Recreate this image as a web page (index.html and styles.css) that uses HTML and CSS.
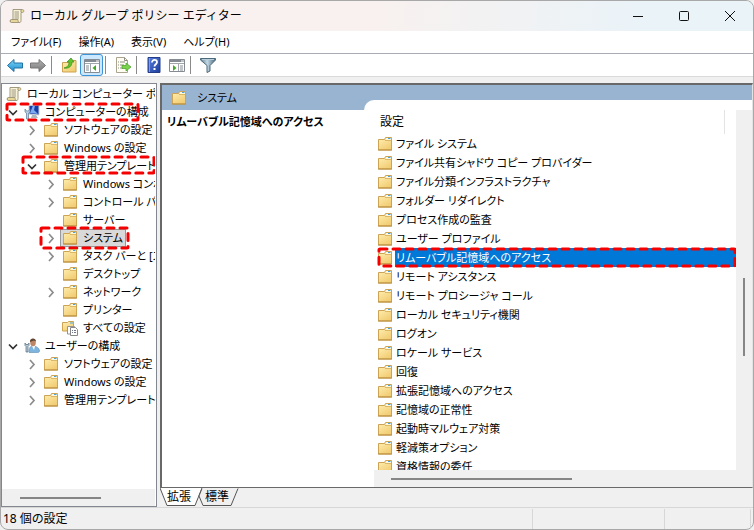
FILE: index.html
```
<!DOCTYPE html>
<html lang="ja">
<head>
<meta charset="utf-8">
<title>ローカル グループ ポリシー エディター</title>
<link rel="stylesheet" href="styles.css">
</head>
<body>
<svg class="defs" aria-hidden="true">
  <defs>
    <linearGradient id="gold" x1="0" y1="0" x2="0.6" y2="1"><stop offset="0" stop-color="#fff0b4"/><stop offset="1" stop-color="#f2cd74"/></linearGradient>
    <linearGradient id="blueArrow" x1="0" y1="0" x2="0" y2="1"><stop offset="0" stop-color="#7fd4f7"/><stop offset="1" stop-color="#1a8fd0"/></linearGradient>
    <linearGradient id="grayArrow" x1="0" y1="0" x2="0" y2="1"><stop offset="0" stop-color="#b5b5b5"/><stop offset="1" stop-color="#777"/></linearGradient>
    <linearGradient id="help" x1="0" y1="0" x2="1" y2="1"><stop offset="0" stop-color="#5a80dc"/><stop offset="1" stop-color="#1c3c9c"/></linearGradient>
    <linearGradient id="steel" x1="0" y1="0" x2="1" y2="0"><stop offset="0" stop-color="#5d7d94"/><stop offset=".45" stop-color="#c4d8e4"/><stop offset="1" stop-color="#48687e"/></linearGradient>
    <symbol id="folder" viewBox="0 1 16 16">
      <path d="M1.500 4.500h6l1-2h6V15h-13z" fill="url(#gold)" stroke="#cda354"/>
      <path d="M9 3h5v2H9z" fill="#fff8dc"/><path d="M11 3h2.500v1H11z" fill="#4ba3dc"/>
      <path d="M8 5.500h6" stroke="#dcb765"/><path d="M1 15h14" stroke="#b88d3c"/>
    </symbol>
    <symbol id="scroll" viewBox="0 0 16 16">
      <path d="M4 1.500h9.500c1.800 0 1.800 3 0 3H12v8c0 1.500-.5 2-2 2H2.500C.8 14.500.8 11.500 2.500 11.500H4z" fill="#f9f3da" stroke="#a19a7d"/>
      <path d="M2.500 11.500H9c0 1.500.4 3 1.500 3h-8C.8 14.500.8 11.500 2.500 11.500z" fill="#e9d697" stroke="#a19a7d"/>
      <path d="M12 2h1.500c1.200 0 1.200 2 0 2H12z" fill="#e9d697"/>
      <path d="M12 1.500V4M5.500 4H10M5.500 6H10M5.500 8H10M5.500 10H10" stroke="#9b957e"/>
    </symbol>
    <symbol id="computer" viewBox="0 0 16 16">
      <path d="M5 1.500l10-.5v10l-10-1z" fill="#173ca8" stroke="#c7ced8"/>
      <path d="M9 1.500h2L10 6l4 4-8-1z" fill="#7eaaf2"/>
      <path d="M8 11h4l2 3H7z" fill="#aeb6c0"/>
      <path d="M1 5v3l1.500 1v6h2V9L6 8V5L4.500 7h-2z" fill="#bdd3e5" stroke="#5c7b97" stroke-width=".7"/>
    </symbol>
    <symbol id="user" viewBox="0 0 16 16">
      <path d="M5 14.500c0-4.500 1-6.500 4-6.500s6.500 2 6.500 5c0 1-1 1.500-2 1.500z" fill="#7fb4de" stroke="#5b8db4" stroke-width=".6"/>
      <path d="M8 8l2 4 1-4z" fill="#fff"/>
      <ellipse cx="9" cy="4.500" rx="2.800" ry="3.800" fill="#bd8766"/>
      <path d="M6 4c-.5-4.500 6-4.500 6-.5L10 2.500z" fill="#5e4534"/>
      <path d="M1 5v2.500L2 8.500V14h2V8.500l1-1V5L4 6.500H2z" fill="#b8c9d6" stroke="#516b80" stroke-width=".7"/>
    </symbol>
    <symbol id="folder-all" viewBox="0 0 16 16">
      <path d="M.5 2.500h5l1-1h5V11H.5z" fill="url(#gold)" stroke="#cda354"/>
      <path d="M8 2.500h3v1H8z" fill="#4ba3dc"/>
      <path d="M5.500 6.500h7V14h-7z" fill="#fff" stroke="#949494"/>
      <path d="M8.500 7.500h5l2 2v6h-7z" fill="#fff" stroke="#888"/>
      <path d="M10 10.500h1M12 10.500h2M10 12.500h1M12 12.500h2" stroke="#6d7786"/>
    </symbol>
    <symbol id="closed" viewBox="0 0 14 14"><path d="M5 3L9 7.500 5 12" fill="none" stroke="#8c8c8c" stroke-width="1.700"/></symbol>
    <symbol id="open" viewBox="0 0 14 14"><path d="M3 5.500L7 9.500l4-4" fill="none" stroke="#333" stroke-width="1.700"/></symbol>
  </defs>
</svg>

<div class="window">
  <header class="titlebar">
    <svg class="icon"><use href="#scroll"/></svg>
    <h1 class="title">ローカル グループ ポリシー エディター</h1>
    <div class="controls">
      <button aria-label="最小化"><svg viewBox="0 0 12 12"><path d="M1 6.500h10"/></svg></button>
      <button aria-label="最大化"><svg viewBox="0 0 12 12"><rect x="1.500" y="1.500" width="9" height="9" rx="1"/></svg></button>
      <button aria-label="閉じる"><svg viewBox="0 0 12 12"><path d="M1 1l10 10M11 1L1 11"/></svg></button>
    </div>
  </header>

  <nav class="menubar">
    <button>ファイル(F)</button><button>操作(A)</button><button>表示(V)</button><button>ヘルプ(H)</button>
  </nav>

  <div class="toolbar">
    <button aria-label="戻る"><svg class="tool" viewBox="0 0 18 18"><path d="M1.500 9.500L8 3.500V7h8.500v5H8v3.500z" fill="url(#blueArrow)" stroke="#2272a4"/></svg></button>
    <button aria-label="進む"><svg class="tool" viewBox="0 0 18 18"><path d="M16.500 9.500L10 3.500V7H1.500v5H10v3.500z" fill="url(#grayArrow)" stroke="#777"/></svg></button>
    <span class="divider"></span>
    <button aria-label="上へ"><svg class="tool" viewBox="0 0 18 18"><path d="M2.500 6.500h6l1.500-2h6V16H2.500z" fill="url(#gold)" stroke="#cda354"/><path d="M4 12c4-1 5-3 5-6H7l4-4 3 4h-2c0 4-3 7-8 6z" fill="#62c42d" stroke="#348c18" stroke-width=".7"/></svg></button>
    <button class="pressed" aria-label="コンソール ツリーの表示"><svg class="tool" viewBox="0 0 18 18"><path d="M1.500 3.500h15v13h-15z" fill="#fff" stroke="#858b92"/><path d="M2 5h14" stroke="#858b92" stroke-width="2"/><path d="M13 5h3" stroke="#fff"/><path d="M2 7.500h14M7.500 8v8" stroke="#a0a6ac"/><path d="M3 10h3M3 12h3M3 14h3" stroke="#858b92"/><path d="M13 9v6l-3.500-3z" fill="#43a82a"/></svg></button>
    <span class="divider"></span>
    <button aria-label="一覧のエクスポート"><svg class="tool" viewBox="0 0 18 18"><path d="M2.500 1.500h8l3 3v12h-11z" fill="#fffdf2" stroke="#aaa48e"/><path d="M10.500 1.500v3h3M4 6h1m1 0h5M4 9h1m1 0h4M4 12h1m1 0h3" fill="none" stroke="#8d8d85"/><path d="M8 9.500h4V7l5 4-5 4v-2.500H8z" fill="#7bd34b" stroke="#489b2e" stroke-width=".7"/></svg></button>
    <span class="divider"></span>
    <button aria-label="ヘルプ"><svg class="tool" viewBox="0 0 18 18"><path d="M3 1.500h12v15H3z" fill="url(#help)" stroke="#233d89"/><path d="M4.500 2v14" stroke="#7f9be2"/><path d="M7 6.500C7 3 12 3.300 12 6.300c0 2-2.500 2-2.500 4.200" fill="none" stroke="#fff" stroke-width="1.800"/><path d="M8.500 12h2v2h-2z" fill="#fff"/></svg></button>
    <button aria-label="操作ウィンドウの表示"><svg class="tool" viewBox="0 0 18 18"><path d="M1.500 3.500h15v12h-15z" fill="#fff" stroke="#858b92"/><path d="M2 5h14" stroke="#858b92" stroke-width="2"/><path d="M13 5h3" stroke="#fff"/><path d="M2 7.500h14M10.500 8v7" stroke="#a0a6ac"/><path d="M12 10h3M12 12h3M12 14h3" stroke="#858b92"/><path d="M5 9v6l3.500-3z" fill="#43a82a"/></svg></button>
    <span class="divider"></span>
    <button aria-label="フィルター"><svg class="tool" viewBox="0 0 18 18"><path d="M1.500 2.500h15V4L11 9.500V15l-3 1.500v-7L1.500 4z" fill="url(#steel)" stroke="#4d697c"/><path d="M3 3.500h12" stroke="#b9cfdb"/></svg></button>
  </div>

  <main class="workspace">
    <section class="tree-panel">
      <ul class="tree">
        <li class="node root"><button class="label"><svg class="icon"><use href="#scroll"/></svg>ローカル コンピューター ポリシー</button></li>
        <li class="node"><svg class="chevron"><use href="#open"/></svg><button class="label"><svg class="icon"><use href="#computer"/></svg>コンピューターの構成</button><svg class="mark mark-computer"><rect width="100%" height="100%"/></svg></li>
        <li class="node level-2"><svg class="chevron"><use href="#closed"/></svg><button class="label"><svg class="icon"><use href="#folder"/></svg>ソフトウェアの設定</button></li>
        <li class="node level-2"><svg class="chevron"><use href="#closed"/></svg><button class="label"><svg class="icon"><use href="#folder"/></svg>Windows の設定</button></li>
        <li class="node level-2"><svg class="chevron"><use href="#open"/></svg><button class="label"><svg class="icon"><use href="#folder"/></svg>管理用テンプレート</button><svg class="mark mark-template"><rect width="100%" height="100%"/></svg></li>
        <li class="node level-3"><svg class="chevron"><use href="#closed"/></svg><button class="label"><svg class="icon"><use href="#folder"/></svg>Windows コンポーネント</button></li>
        <li class="node level-3"><svg class="chevron"><use href="#closed"/></svg><button class="label"><svg class="icon"><use href="#folder"/></svg>コントロール パネル</button></li>
        <li class="node level-3"><svg class="chevron"></svg><button class="label"><svg class="icon"><use href="#folder"/></svg>サーバー</button></li>
        <li class="node level-3"><svg class="chevron"><use href="#closed"/></svg><button class="label current"><svg class="icon"><use href="#folder"/></svg>システム</button><svg class="mark mark-system"><rect width="100%" height="100%"/></svg></li>
        <li class="node level-3"><svg class="chevron"><use href="#closed"/></svg><button class="label"><svg class="icon"><use href="#folder"/></svg>タスク バーと [スタート] メニュー</button></li>
        <li class="node level-3"><svg class="chevron"></svg><button class="label"><svg class="icon"><use href="#folder"/></svg>デスクトップ</button></li>
        <li class="node level-3"><svg class="chevron"><use href="#closed"/></svg><button class="label"><svg class="icon"><use href="#folder"/></svg>ネットワーク</button></li>
        <li class="node level-3"><svg class="chevron"></svg><button class="label"><svg class="icon"><use href="#folder"/></svg>プリンター</button></li>
        <li class="node level-3"><svg class="chevron"></svg><button class="label"><svg class="icon"><use href="#folder-all"/></svg>すべての設定</button></li>
        <li class="node"><svg class="chevron"><use href="#open"/></svg><button class="label"><svg class="icon"><use href="#user"/></svg>ユーザーの構成</button></li>
        <li class="node level-2"><svg class="chevron"><use href="#closed"/></svg><button class="label"><svg class="icon"><use href="#folder"/></svg>ソフトウェアの設定</button></li>
        <li class="node level-2"><svg class="chevron"><use href="#closed"/></svg><button class="label"><svg class="icon"><use href="#folder"/></svg>Windows の設定</button></li>
        <li class="node level-2"><svg class="chevron"><use href="#closed"/></svg><button class="label"><svg class="icon"><use href="#folder"/></svg>管理用テンプレート</button></li>
      </ul>
      <div class="scroll-x tree-scroll"><div class="thumb"></div></div>
    </section>

    <div class="detail">
      <section class="detail-panel">
        <header class="detail-header"><svg class="icon"><use href="#folder"/></svg><h2>システム</h2></header>
        <div class="description"><h3>リムーバブル記憶域へのアクセス</h3></div>
        <div class="settings">
          <div class="curve"></div>
          <div class="column-head"><span>設定</span></div>
          <ul class="list">
            <li><svg class="icon"><use href="#folder"/></svg><button>ファイル システム</button></li>
            <li><svg class="icon"><use href="#folder"/></svg><button>ファイル共有シャドウ コピー プロバイダー</button></li>
            <li><svg class="icon"><use href="#folder"/></svg><button>ファイル分類インフラストラクチャ</button></li>
            <li><svg class="icon"><use href="#folder"/></svg><button>フォルダー リダイレクト</button></li>
            <li><svg class="icon"><use href="#folder"/></svg><button>プロセス作成の監査</button></li>
            <li><svg class="icon"><use href="#folder"/></svg><button>ユーザー プロファイル</button></li>
            <li class="selected"><svg class="icon"><use href="#folder"/></svg><button>リムーバブル記憶域へのアクセス</button><svg class="mark mark-setting"><rect width="100%" height="100%"/></svg></li>
            <li><svg class="icon"><use href="#folder"/></svg><button>リモート アシスタンス</button></li>
            <li><svg class="icon"><use href="#folder"/></svg><button>リモート プロシージャ コール</button></li>
            <li><svg class="icon"><use href="#folder"/></svg><button>ローカル セキュリティ機関</button></li>
            <li><svg class="icon"><use href="#folder"/></svg><button>ログオン</button></li>
            <li><svg class="icon"><use href="#folder"/></svg><button>ロケール サービス</button></li>
            <li><svg class="icon"><use href="#folder"/></svg><button>回復</button></li>
            <li><svg class="icon"><use href="#folder"/></svg><button>拡張記憶域へのアクセス</button></li>
            <li><svg class="icon"><use href="#folder"/></svg><button>記憶域の正常性</button></li>
            <li><svg class="icon"><use href="#folder"/></svg><button>起動時マルウェア対策</button></li>
            <li><svg class="icon"><use href="#folder"/></svg><button>軽減策オプション</button></li>
            <li><svg class="icon"><use href="#folder"/></svg><button>資格情報の委任</button></li>
          </ul>
          <div class="scroll-y"><div class="thumb"></div></div>
          <div class="scroll-x list-scroll"><div class="thumb"></div></div>
        </div>
      </section>
      <div class="tabs">
        <button class="tab"><svg viewBox="0 0 42 18"><path d="M0 0l7 17.500h28L42 0" fill="#fff" stroke="#555"/></svg><span>拡張</span></button>
        <button class="tab"><svg viewBox="0 0 42 18"><path d="M4 .5L1 8l4 9.500h28L40 .5" fill="#f0f0f0" stroke="#555"/></svg><span>標準</span></button>
      </div>
    </div>
  </main>

  <footer class="status"><span>18 個の設定</span><span></span><span></span></footer>
</div>
</body>
</html>
```
FILE: styles.css
```
* { box-sizing: border-box; }

body {
  margin: 0;
  background: #f0f0f0;
  color: #000;
  font: 12px/18px "Noto Sans", "Noto Sans CJK JP", sans-serif;
  font-feature-settings: "palt";
}

h1, h2, h3, ul { margin: 0; padding: 0; font-size: inherit; font-weight: normal; list-style: none; }
button { margin: 0; padding: 0; border: 0; background: none; color: inherit; font: inherit; font-feature-settings: inherit; white-space: nowrap; }
svg { display: block; flex: none; }
.defs { position: absolute; width: 0; height: 0; }
.icon { width: 16px; height: 16px; }

.window {
  display: flex;
  flex-direction: column;
  height: 100vh;
  overflow: hidden;
  border: 1px solid #a8a8a8;
  border-radius: 8px;
  background: #f0f0f0;
}

.titlebar { display: flex; align-items: center; height: 30px; padding-left: 8px; background: linear-gradient(90deg, #f8f1ef 50%, #eaf3f8 85%); }
.title { flex: 1; margin-left: 5px; font-feature-settings: normal; }
.controls { display: flex; }
.controls button { width: 46px; height: 30px; display: grid; place-items: center; }
.controls svg { width: 12px; height: 12px; fill: none; stroke: #111; }

.menubar, .tree, .detail-header, .description, .list { font-size: 11px; }

.menubar { display: flex; gap: 17px; height: 23px; padding: 1px 10px; background: #fff; border-bottom: 1px solid #a9adb3; }

.toolbar { display: flex; align-items: center; height: 23px; padding-left: 2px; background: #fff; border-bottom: 1px solid #dadada; }
.toolbar button { display: grid; place-items: center; width: 23px; height: 22px; }
.toolbar .pressed { border: 1px solid #3c93d6; border-radius: 3px; background: #cce8ff; }
.tool { width: 18px; height: 18px; }
.divider { width: 1px; height: 18px; margin: 0 5px 0 2px; background: #8a8a8a; }

.workspace { flex: 1; display: flex; gap: 3px; min-height: 0; padding-top: 6px; }
.tree-panel { display: flex; flex-direction: column; width: 156px; padding-right: 1px; border: 1px solid #828790; background: #fff; }
.tree { flex: 1; min-height: 0; overflow: hidden; padding-top: 1px; }
.node { position: relative; display: flex; align-items: center; gap: 2px; height: 18px; padding-left: 4px; }
.root { padding-left: 2px; }
.level-2 { padding-left: 23px; }
.level-3 { padding-left: 42px; }
.chevron { width: 14px; height: 14px; }
.label { display: flex; align-items: center; gap: 5px; height: 18px; padding: 0 2px 0 1px; border: 1px solid transparent; line-height: 16px; }
.current { border-color: #999; background: #d9d9d9; }

.scroll-x, .scroll-y { background: #f0f0f0; }
.scroll-x { height: 17px; padding-top: 8px; }
.scroll-x .thumb { height: 2px; background: #868686; }
.tree-scroll .thumb { width: 53%; margin-left: 18px; }

.detail { flex: 1; display: flex; flex-direction: column; min-width: 0; }
.detail-panel {
  flex: 1;
  display: grid;
  grid-template: 25px 1fr / 212px 1fr;
  min-height: 0;
  border: solid #696969;
  border-width: 2px 1px 1px 2px;
  border-right-color: #e3e3e3;
  background: #fff;
}
.detail-header { grid-column: 1 / 3; display: flex; align-items: center; gap: 10px; padding-left: 9px; background: #99b4d1; }
.description { padding: 3px 5px; }
.description h3 { font-weight: bold; }
.settings { position: relative; display: grid; grid-template: 24px 1fr 17px / 1fr 16px; min-height: 0; min-width: 0; }
.curve { position: absolute; inset: -10px 0 auto -10px; height: 10px; border-top-left-radius: 10px; background: #fff; }
.column-head { margin-right: 11px; padding: 3px 6px; border-right: 1px solid #e3e3e3; }
.list { grid-area: 2 / 1; overflow: hidden; }
.list li { position: relative; display: flex; align-items: center; gap: 2px; height: 19px; padding-left: 3px; }
.list button { flex: 1; height: 19px; padding: 0 1px; text-align: left; }
.selected button { background: #0078d7; color: #fff; }
.scroll-y { grid-area: 1 / 2 / 3 / 3; padding: 168px 0 0 7px; }
.scroll-y .thumb { width: 2px; height: 78px; background: #868686; }
.list-scroll { grid-area: 3 / 1 / 4 / 3; }
.list-scroll .thumb { width: 48%; margin-left: 17px; }

.tabs { display: flex; height: 19px; }
.tab { position: relative; width: 38px; height: 18px; }
.tab svg { position: absolute; inset: 0 auto auto 0; width: 42px; height: 18px; }
.tab span { position: relative; }

.status { display: grid; grid-template-columns: 4fr 1fr 86px; height: 22px; padding: 1px 2px; border-top: 1px solid #d7d7d7; line-height: 20px; }
.status span { border-right: 1px solid #d7d7d7; }

.mark { position: absolute; overflow: visible; }
.mark rect { fill: none; stroke: #f50000; stroke-width: 3; stroke-dasharray: 7 6; stroke-linecap: round; rx: 1px; }
.mark-computer { left: 5px; top: 1px; width: 131px; height: 16px; }
.mark-template { left: 21px; top: 0; width: 131px; height: 16px; }
.mark-system { left: 39px; top: -1px; width: 87px; height: 20px; }
.mark-setting { left: 5px; top: 1px; width: calc(100% - 6px); height: 17px; }
```
